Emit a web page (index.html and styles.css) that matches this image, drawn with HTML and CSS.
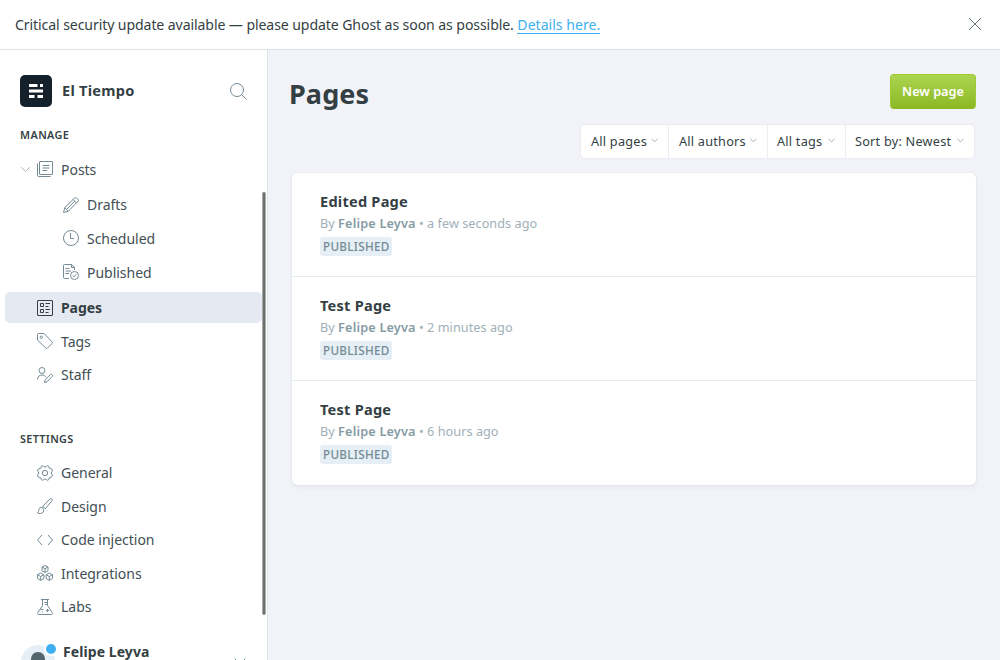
FILE: index.html
```html
<!DOCTYPE html>
<html lang="en">
<head>
<meta charset="utf-8">
<title>Pages - El Tiempo</title>
<link rel="stylesheet" href="styles.css">
</head>
<body>
<div class="app">
  <header class="banner">
    <p class="banner-text">Critical security update available — please update Ghost as soon as possible. <a class="banner-link" href="#">Details here.</a></p>
    <svg class="banner-close" width="12" height="12" viewBox="0 0 12 12"><path d="M0 0l12 12M12 0L0 12"/></svg>
  </header>
  <div class="body">
    <aside class="sidebar">
      <div class="brand">
        <svg class="brand-logo" width="32" height="32" viewBox="0 0 32 32"><rect width="32" height="32" rx="5" fill="#15212a"/><path fill="#fff" d="M9 9h8.500v3H9zM20 9h3v3h-3zM9 14.500h14v3H9zM9 20h5.500v3H9zM17.500 20H23v3h-5.500z"/></svg>
        <span class="brand-name">El Tiempo</span>
        <svg class="icon search" width="17" height="17" viewBox="0 0 17 17"><circle cx="7" cy="7" r="6.500"/><path d="M11.700 11.700l4.800 4.800"/></svg>
      </div>
      <h2 class="section">MANAGE</h2>
      <nav class="nav">
        <a class="item posts">
          <svg class="chevron" width="9" height="5" viewBox="0 0 9 5"><path d="M.3.3l4.200 4.200L8.700.3"/></svg>
          <svg class="icon" width="16" height="16" viewBox="0 0 16 16"><rect x="2.500" y=".5" width="13" height="13" rx=".5"/><path d="M.5 2.500v12a1 1 0 0 0 1 1h12M5.500 4.500h7M5.500 7h7M5.500 9.500h4.500"/></svg>
          <span>Posts</span></a>
        <a class="item sub"><svg class="icon" width="16" height="16" viewBox="0 0 16 16"><path d="M.5 15.500l1.300-4.800L11.600.9a1.300 1.300 0 0 1 1.900 0l1.600 1.600a1.300 1.300 0 0 1 0 1.900L5.300 14.200zM1.800 10.700l3.500 3.500M10 2.500L13.500 6M3.500 12.500l8.300-8.300"/></svg><span>Drafts</span></a>
        <a class="item sub scheduled"><svg class="icon" width="16" height="16" viewBox="0 0 16 16"><circle cx="8" cy="8" r="7.500"/><path d="M7.500 3v5.500H11"/></svg><span>Scheduled</span></a>
        <a class="item sub"><svg class="icon" width="16" height="16" viewBox="0 0 16 16"><path d="M6 14.500H1.500a1 1 0 0 1-1-1v-12a1 1 0 0 1 1-1h7l3 3V6M8.500.5v3h3M2.500 4.500h4M2.500 7h5.500M2.500 9.500h3.500"/><circle cx="11.500" cy="11.500" r="4"/><path d="M9.700 11.600l1.300 1.300 2.300-2.700"/></svg><span>Published</span></a>
        <a class="item active"><svg class="icon" width="16" height="16" viewBox="0 0 16 16"><rect x=".5" y=".5" width="15" height="15" rx=".5"/><path d="M3.500 3.500h3v3h-3zM3.500 9.500h3v3h-3zM8.500 3.500h4.500M8.500 6.500h3M8.500 9.500h4.500M8.500 12.500h3"/></svg><span>Pages</span></a>
        <a class="item"><svg class="icon" width="16" height="16" viewBox="0 0 16 16"><path d="M.5 1.500a1 1 0 0 1 1-1H7L15.200 9a1 1 0 0 1 0 1.400l-4.800 4.800a1 1 0 0 1-1.400 0L.5 7z"/><circle cx="4.300" cy="4.300" r="1.200"/></svg><span>Tags</span></a>
        <a class="item"><svg class="icon" width="16" height="16" viewBox="0 0 16 16"><circle cx="5" cy="3.500" r="3"/><path d="M.5 12.500c0-3 2-4.500 4.500-4.500 1.600 0 3 .6 3.700 1.800M7.500 15.500l.6-2.700 5.300-5.300a1 1 0 0 1 1.400 0l.5.5a1 1 0 0 1 0 1.400L10 14.800z"/></svg><span>Staff</span></a>
      </nav>
      <h2 class="section settings">SETTINGS</h2>
      <nav class="nav nav-settings">
        <a class="item"><svg class="icon" width="16" height="16" viewBox="0 0 16 16"><path d="M6.300 1.200Q8 3.200 9.700 1.200Q10.300 .3 11.600 1.200Q11.500 3.900 14.300 3.700Q15.700 4.900 15.300 6.300Q12.900 8 15.300 9.700Q15.600 11.200 14.300 12.300Q11.500 12.100 11.600 14.800Q10.300 15.700 9.700 14.800Q8 12.800 6.300 14.800Q5.700 15.700 4.400 14.800Q4.500 12.100 1.700 12.300Q.3 11.100.7 9.700Q3.100 8 .7 6.300Q.4 4.800 1.700 3.700Q4.500 3.900 4.400 1.200Q5.700.3 6.300 1.200z"/><circle cx="8" cy="8" r="2.700"/></svg><span>General</span></a>
        <a class="item"><svg class="icon" width="16" height="16" viewBox="0 0 16 16"><path d="M5.500 8.700L12.800 1c1.500-1.200 3.200.4 2.100 1.900L8.200 10.800M5.500 8.700c1.300.2 2.300 1 2.700 2.100M5 9.500c-1.500-.3-2.900.5-3.100 2-.2 1.500-.4 2.400-1.400 3.500 1.700.8 4.300.7 5.500-.6 1.400-1.500.6-4.400-1-4.900z"/></svg><span>Design</span></a>
        <a class="item"><svg class="icon" width="16" height="16" viewBox="0 0 16 16"><path d="M5 3L.5 8 5 13M11 3l4.500 5L11 13"/></svg><span>Code injection</span></a>
        <a class="item"><svg class="icon" width="16" height="16" viewBox="0 0 16 16"><path d="M8 .5l3 1.500v3.800L8 7.500 5 5.800V2zM5 2l3 1.700L11 2M8 3.700v3.800M3.700 8l3.200 1.700v3.800l-3.200 1.900-3.200-1.900V9.700zM.5 9.700l3.200 1.800 3.200-1.800M3.700 11.500v3.900M12.300 8l3.200 1.700v3.800l-3.200 1.900-3.200-1.900V9.700zM9.100 9.700l3.200 1.800 3.200-1.800M12.300 11.500v3.900"/></svg><span>Integrations</span></a>
        <a class="item"><svg class="icon" width="16" height="16" viewBox="0 0 16 16"><path d="M4 .5h8M5.500.5v6L.8 13.700c-.6.9-.2 1.800.7 1.800h13c.9 0 1.300-.9.7-1.800L10.500 6.500v-6M3.500 10.500h3M7.500 3.500h3M8 5.500h2.500M10.500 10v3M9 11.500h3M5.500 12.500v1"/></svg><span>Labs</span></a>
      </nav>
      <div class="user">
        <span class="avatar-box"><svg width="36" height="36" viewBox="0 0 36 36"><circle cx="18" cy="18" r="17" fill="#e5eff5"/><path d="M11 15.500c0-4.500 3-7.500 7-7.500s7 3 7 7.500-3 9-7 9-7-4.500-7-9z" fill="#54666d"/></svg><i class="dot"></i></span>
        <span class="user-name">Felipe Leyva</span>
        <svg class="user-chevron" width="12" height="7" viewBox="0 0 12 7"><path d="M.5.5L6 6 11.500.5"/></svg>
      </div>
      <div class="scrollbar"></div>
    </aside>
    <main class="main">
      <div class="head"><h1 class="title">Pages</h1><button class="new">New page</button></div>
      <div class="filters">
        <span class="filter f-pages">All pages<svg class="caret" width="7" height="5" viewBox="0 0 7 5"><path d="M.5.7l3 3.300L6.500.7"/></svg></span>
        <span class="filter f-authors">All authors<svg class="caret" width="7" height="5" viewBox="0 0 7 5"><path d="M.5.7l3 3.300L6.500.7"/></svg></span>
        <span class="filter f-tags">All tags<svg class="caret" width="7" height="5" viewBox="0 0 7 5"><path d="M.5.7l3 3.300L6.500.7"/></svg></span>
        <span class="filter f-sort">Sort by: Newest<svg class="caret" width="7" height="5" viewBox="0 0 7 5"><path d="M.5.7l3 3.300L6.500.7"/></svg></span>
      </div>
      <div class="list">
        <article class="row"><h3 class="row-title">Edited Page</h3><p class="meta">By <b>Felipe Leyva</b> • a few seconds ago</p><span class="badge">PUBLISHED</span></article>
        <article class="row"><h3 class="row-title">Test Page</h3><p class="meta">By <b>Felipe Leyva</b> • 2 minutes ago</p><span class="badge">PUBLISHED</span></article>
        <article class="row"><h3 class="row-title">Test Page</h3><p class="meta">By <b>Felipe Leyva</b> • 6 hours ago</p><span class="badge">PUBLISHED</span></article>
      </div>
    </main>
  </div>
</div>
</body>
</html>
```
FILE: styles.css
```css
* { box-sizing: border-box; margin: 0; padding: 0; }
body { font-family: "Noto Sans", "Open Sans", sans-serif; color: #343f44; overflow: hidden; }
svg { display: block; flex: none; fill: none; }
.app { display: flex; flex-direction: column; height: 660px; overflow: hidden; }

.banner { display: flex; align-items: center; justify-content: space-between; flex: none; height: 50px; padding: 0 19px 1px 15px; background: #fff; border-bottom: 1px solid #dae1e3; }
.banner-text { padding-top: 2px; font-size: 14.1px; letter-spacing: -.1px; line-height: 20px; white-space: nowrap; }
.banner-link { color: #3eb0ef; letter-spacing: 0; text-decoration: none; border-bottom: 1px solid #3eb0ef; display: inline-block; line-height: 17px; }
.banner-close { stroke: #54666d; stroke-width: .9; }

.body { display: flex; flex: 1; min-height: 0; }
.sidebar { position: relative; flex: none; width: 268px; background: #fff; border-right: 1px solid #dfe4ea; overflow: hidden; }
.brand { display: flex; align-items: center; height: 32px; margin: 25px 20px 0 20px; }
.brand-name { flex: 1; margin-left: 10px; padding-bottom: 2px; font-size: 14.6px; font-weight: 700; letter-spacing: .24px; }
.section { margin: 18px 0 0 20px; height: 20px; font-size: 10.8px; line-height: 20px; font-weight: 600; letter-spacing: .42px; }
.nav { padding: 9px 5px 0; }
.item { display: flex; align-items: center; height: 31px; margin-bottom: 2.5px; padding-left: 32px; border-radius: 5px; font-size: 14px; letter-spacing: -.02px; color: #424f55; }
.item span { margin-left: 8px; }
.icon { stroke: #738a94; stroke-width: 1; stroke-linejoin: round; }
.posts { padding-left: 16px; margin-bottom: 4px; }
.posts .icon { margin-top: -1px; }
.chevron { stroke: #a8b6bd; margin-right: 7px; }
.sub { padding-left: 58px; margin-bottom: 3px; }
.scheduled .icon, .sub + .sub .icon { margin-top: -1px; }
.sub + .active { margin-top: 4px; }
.active { background: #e5eaf2; font-weight: 700; color: #343f44; width: 257px; letter-spacing: -.08px; }
.active .icon { stroke: #343f44; }
.settings { margin-top: 39px; letter-spacing: .34px; }
.nav-settings { padding-top: 8px; }
.user { display: flex; height: 40px; margin: 22px 21px 0 20px; }
.avatar-box { position: relative; width: 36px; height: 36px; }
.dot { position: absolute; left: 24px; top: -2px; width: 14px; height: 14px; border: 2px solid #fff; border-radius: 50%; background: #3eb0ef; }
.user-name { flex: 1; margin-left: 7px; margin-top: -1px; font-size: 14px; line-height: 18px; font-weight: 700; letter-spacing: .08px; }
.user-chevron { stroke: #738a94; margin: 14px 0 0; }
.scrollbar { position: absolute; right: 1px; top: 142px; width: 4px; height: 423px; border-radius: 2px; background: #6d706d; border: solid #a9aaa9; border-width: 0 1px; }

.main { flex: 1; padding: 24px 24px 0 24px; background: #f2f3f8; }
.head { display: flex; justify-content: space-between; height: 35px; }
.title { margin-left: -3px; font-size: 27px; line-height: 40px; font-weight: 700; letter-spacing: .1px; }
.new { width: 86px; height: 35px; padding-bottom: 2px; border: 1px solid #9fca37; border-bottom-color: #8fb927; border-radius: 4px; background: linear-gradient(#acd550, #8db825); color: #fff; font: 600 12.7px "Noto Sans", sans-serif; white-space: nowrap; }
.filters { display: flex; width: 393px; height: 33px; margin: 16px 2px 0 auto; background: #fff; border-radius: 4px; box-shadow: 0 0 2px rgba(60, 75, 100, .16); }
.filter { display: flex; align-items: center; justify-content: space-between; padding: 0 10px 2px; font-size: 12.7px; letter-spacing: .23px; white-space: nowrap; }
.filter + .filter { border-left: 1px solid #ecedf2; }
.f-pages { width: 87px; }
.f-authors { width: 99px; }
.f-tags { width: 78px; padding-left: 9px; }
.f-sort { width: 129px; padding-left: 9px; }
.caret { stroke: #a8b6bd; }

.list { height: 312px; margin-top: 15px; background: #fff; border-radius: 5px; box-shadow: 0 0 1px rgba(60, 75, 100, .2), 0 2px 4px rgba(60, 75, 100, .07); }
.row { height: 104px; padding: 18px 28px 0; border-bottom: 1px solid #e3ecf3; }
.row:last-child { border-bottom: 0; }
.row-title { font-size: 14.6px; line-height: 20px; font-weight: 700; letter-spacing: .22px; }
.meta { height: 20px; margin-top: 2px; font-size: 12.7px; line-height: 20px; letter-spacing: .03px; color: #a1b0b7; white-space: pre; }
.meta b { font-weight: 600; letter-spacing: .17px; color: #869ba5; }
.badge { display: block; width: 72px; height: 19px; margin-top: 4px; padding-left: 3px; border-radius: 3px; background: #e5eff5; color: #738a94; font-size: 11.7px; line-height: 19px; font-weight: 500; letter-spacing: .3px; }
```
